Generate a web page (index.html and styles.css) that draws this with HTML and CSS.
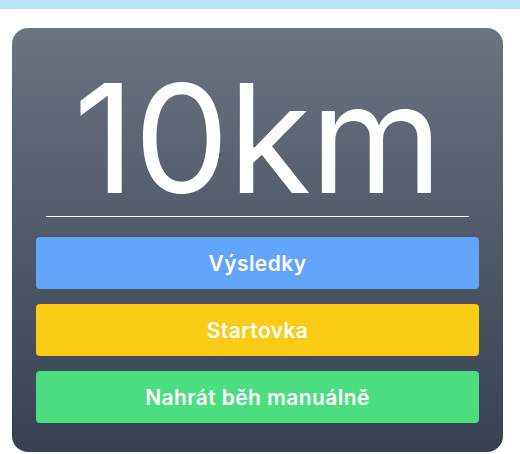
FILE: index.html
```html
<!DOCTYPE html>
<html lang="cs">
<head>
<meta charset="utf-8">
<link rel="stylesheet" href="styles.css">
</head>
<body>
<div class="topbar"></div>
<main class="page">
  <section class="card">
    <h1 class="title">10km</h1>
    <hr class="divider">
    <div class="actions">
      <a class="btn btn-blue">Výsledky</a>
      <a class="btn btn-yellow">Startovka</a>
      <a class="btn btn-green">Nahrát běh manuálně</a>
    </div>
  </section>
</main>
</body>
</html>
```
FILE: styles.css
```css
html, body {
  margin: 0;
  padding: 0;
  background: #ffffff;
  font-family: Inter, "Noto Sans", sans-serif;
}
.topbar {
  height: 9px;
  background: #bae6fd;
}
.page {
  padding: 19px 17px 0 12px;
}
.card {
  width: 491px;
  box-sizing: border-box;
  border-radius: 16px;
  background: linear-gradient(to bottom, #6b7280, #374151);
  padding: 0 24px 29px;
  display: flex;
  flex-direction: column;
}
.title {
  margin: 0;
  text-align: center;
  color: #ffffff;
  font-size: 151px;
  font-weight: 400;
  line-height: 1;
  padding-top: 35px;
  letter-spacing: -1px;
}
.divider {
  margin: 2px 10px 20px;
  border: 0;
  height: 1px;
  background: #ffffff;
}
.actions {
  display: flex;
  flex-direction: column;
  gap: 15px;
}
.btn {
  display: flex;
  align-items: center;
  justify-content: center;
  height: 52px;
  border-radius: 4px;
  color: #ffffff;
  font-size: 21px;
  font-weight: 600;
  letter-spacing: 0.4px;
}
.btn-blue { background: #60a5fa; }
.btn-yellow { background: #facc15; }
.btn-green { background: #4ade80; }
```
